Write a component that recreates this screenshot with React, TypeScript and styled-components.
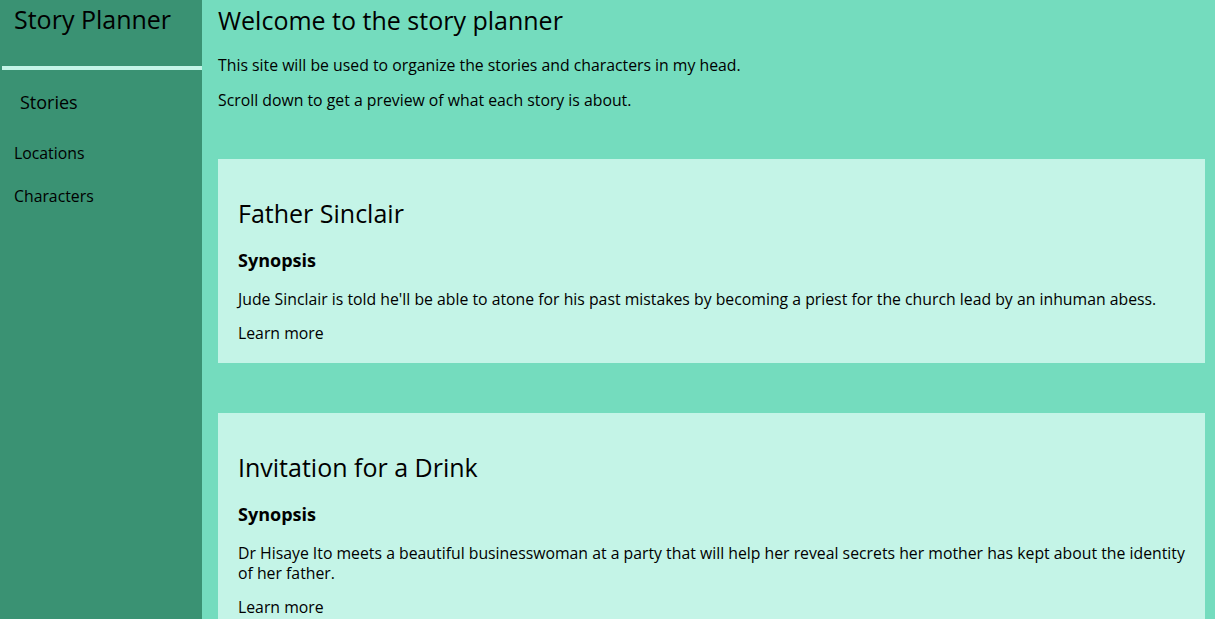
import React from "react";
import styled, { createGlobalStyle } from "styled-components";

const Global = createGlobalStyle`
  html, body {
    margin: 0;
    padding: 0;
    background: #74dcbe;
  }
  body {
    font-family: "Open Sans", "Noto Sans", sans-serif;
    color: #000;
  }
  * { box-sizing: border-box; }
`;

const Layout = styled.div`
  display: flex;
  min-height: 619px;
`;

const Sidebar = styled.nav`
  width: 202px;
  flex-shrink: 0;
  background: #3a9273;
  display: flex;
  flex-direction: column;
`;

const Brand = styled.h1`
  margin: 0;
  height: 66px;
  padding: 4px 14px 0;
  font-size: 25px;
  line-height: 30px;
  font-weight: 400;
`;

const Divider = styled.div`
  height: 4px;
  margin-left: 2px;
  background: #c4f4e7;
`;

const NavList = styled.ul`
  list-style: none;
  margin: 0;
  padding: 0;
  display: flex;
  flex-direction: column;
`;

const NavItem = styled.li<{ $active?: boolean }>`
  padding-left: ${(p) => (p.$active ? "20px" : "14px")};
  font-size: ${(p) => (p.$active ? "18px" : "15.8px")};
  line-height: 20px;
  margin-top: ${(p) => (p.$active ? "22px" : "0")};
  margin-bottom: ${(p) => (p.$active ? "31px" : "23px")};
`;

const Main = styled.main`
  flex: 1;
  padding: 5px 10px 0 16px;
  display: flex;
  flex-direction: column;
`;

const Title = styled.h2`
  margin: 0;
  font-size: 25px;
  line-height: 30px;
  font-weight: 400;
`;

const Intro = styled.p<{ $gap: number }>`
  margin: ${(p) => p.$gap}px 0 0;
  font-size: 15.8px;
  line-height: 20px;
`;

const Cards = styled.div`
  margin-top: 49px;
  display: flex;
  flex-direction: column;
  gap: 50px;
`;

const Card = styled.article`
  background: #c4f4e7;
  padding: 39px 20px 20px;
  display: flex;
  flex-direction: column;
`;

const CardTitle = styled.h3`
  margin: 0;
  font-size: 25px;
  line-height: 30px;
  font-weight: 400;
`;

const SubHeading = styled.h4`
  margin: 20px 0 0;
  font-size: 18px;
  line-height: 24px;
  font-weight: 700;
`;

const Synopsis = styled.p`
  margin: 17px 0 0;
  font-size: 15.8px;
  line-height: 20px;
`;

const LearnMore = styled.a`
  margin-top: 14px;
  font-size: 15.8px;
  line-height: 20px;
  color: #000;
  text-decoration: none;
`;

const stories = [
  {
    title: "Father Sinclair",
    synopsis:
      "Jude Sinclair is told he'll be able to atone for his past mistakes by becoming a priest for the church lead by an inhuman abess.",
  },
  {
    title: "Invitation for a Drink",
    synopsis:
      "Dr Hisaye Ito meets a beautiful businesswoman at a party that will help her reveal secrets her mother has kept about the identity of her father.",
  },
];

export default function App() {
  return (
    <>
      <Global />
      <Layout>
        <Sidebar>
          <Brand>Story Planner</Brand>
          <Divider />
          <NavList>
            <NavItem $active>Stories</NavItem>
            <NavItem>Locations</NavItem>
            <NavItem>Characters</NavItem>
          </NavList>
        </Sidebar>
        <Main>
          <Title>Welcome to the story planner</Title>
          <Intro $gap={20}>
            This site will be used to organize the stories and characters in my head.
          </Intro>
          <Intro $gap={15}>Scroll down to get a preview of what each story is about.</Intro>
          <Cards>
            {stories.map((s) => (
              <Card key={s.title}>
                <CardTitle>{s.title}</CardTitle>
                <SubHeading>Synopsis</SubHeading>
                <Synopsis>{s.synopsis}</Synopsis>
                <LearnMore href="#">Learn more</LearnMore>
              </Card>
            ))}
          </Cards>
        </Main>
      </Layout>
    </>
  );
}
